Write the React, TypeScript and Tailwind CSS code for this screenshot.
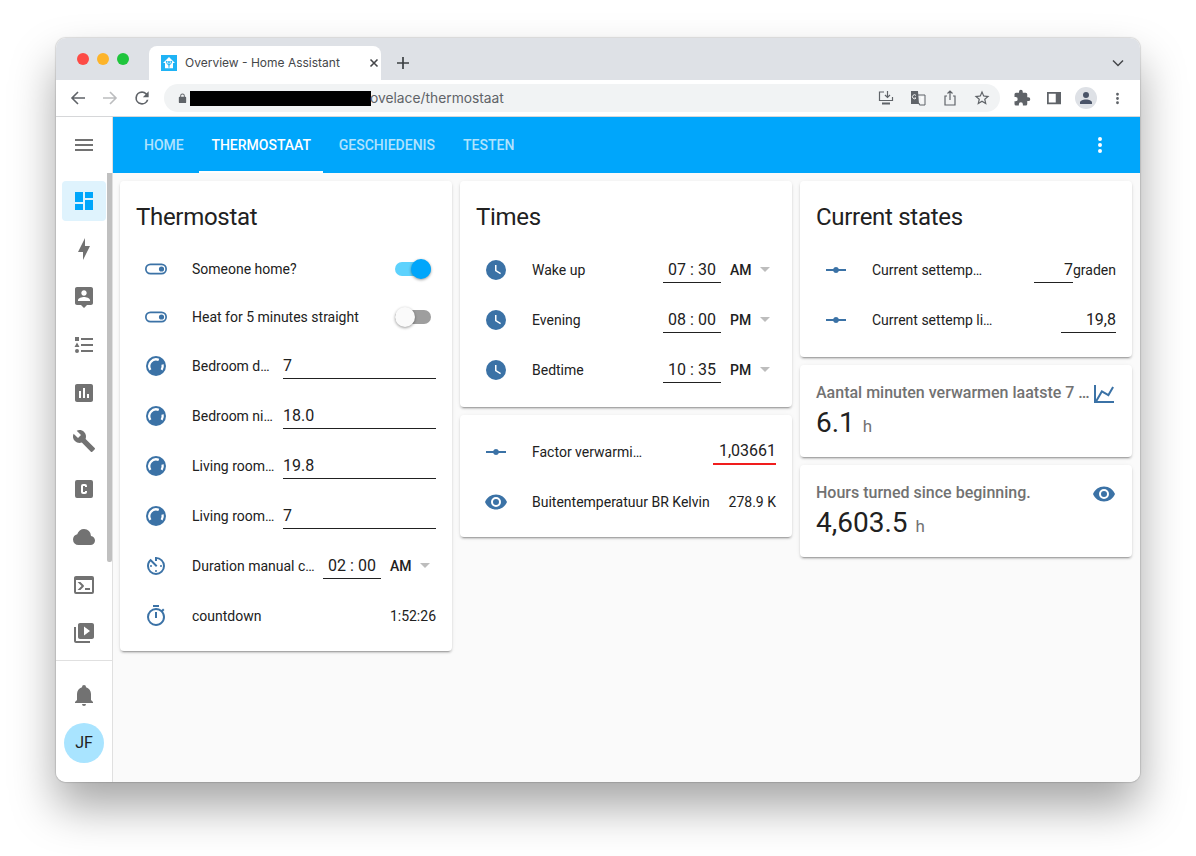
import { ReactNode } from "react";

const BLUE = "text-[#3b72a6]";

const P = {
  menu: "M3 6h18v2H3V6m0 5h18v2H3v-2m0 5h18v2H3v-2Z",
  dots: "M12 16a2 2 0 0 1 2 2 2 2 0 0 1-2 2 2 2 0 0 1-2-2 2 2 0 0 1 2-2m0-6a2 2 0 0 1 2 2 2 2 0 0 1-2 2 2 2 0 0 1-2-2 2 2 0 0 1 2-2m0-6a2 2 0 0 1 2 2 2 2 0 0 1-2 2 2 2 0 0 1-2-2 2 2 0 0 1 2-2Z",
  dashboard: "M13,3V9H21V3M13,21H21V11H13M3,21H11V15H3M3,13H11V3H3V13Z",
  bolt: "M11 15H6L13 1V9H18L11 23V15Z",
  personPin: "M19 2H5c-1.11 0-2 .9-2 2v14c0 1.1.89 2 2 2h4l3 3 3-3h4c1.1 0 2-.9 2-2V4c0-1.1-.9-2-2-2zm-7 3.3c1.49 0 2.7 1.21 2.7 2.7 0 1.49-1.21 2.7-2.7 2.7-1.49 0-2.7-1.21-2.7-2.7 0-1.49 1.21-2.7 2.7-2.7zM18 16H6v-.9c0-2 4-3.1 6-3.1s6 1.1 6 3.1v.9z",
  list: "M5,9.5L7.5,14H2.5L5,9.5M3,4H7V8H3V4M5,20A2,2 0 0,0 7,18A2,2 0 0,0 5,16A2,2 0 0,0 3,18A2,2 0 0,0 5,20M9,5V7H21V5H9M9,19H21V17H9V19M9,13H21V11H9V13Z",
  chartBox: "M9 17H7V10H9V17M13 17H11V7H13V17M17 17H15V13H17V17M19 3H5C3.9 3 3 3.9 3 5V19C3 20.1 3.9 21 5 21H19C20.1 21 21 20.1 21 19V5C21 3.9 20.1 3 19 3Z",
  wrench: "M22.7,19L13.6,9.9C14.5,7.6 14,4.9 12.1,3C10.1,1 7.1,0.6 4.7,1.7L9,6L6,9L1.6,4.7C0.4,7.1 0.9,10.1 2.9,12.1C4.8,14 7.5,14.5 9.8,13.6L18.9,22.7C19.3,23.1 19.9,23.1 20.3,22.7L22.6,20.4C23.1,20 23.1,19.3 22.7,19Z",
  cBox: "M11,7A2,2 0 0,0 9,9V15A2,2 0 0,0 11,17H13A2,2 0 0,0 15,15V14H13V15H11V9H13V10H15V9A2,2 0 0,0 13,7H11M5,3H19A2,2 0 0,1 21,5V19A2,2 0 0,1 19,21H5A2,2 0 0,1 3,19V5A2,2 0 0,1 5,3Z",
  cloud: "M6.5 20Q4.22 20 2.61 18.43 1 16.85 1 14.58 1 12.63 2.17 11.1 3.35 9.57 5.25 9.15 5.88 6.85 7.75 5.43 9.63 4 12 4 14.93 4 16.96 6.04 19 8.07 19 11 20.73 11.2 21.86 12.5 23 13.78 23 15.5 23 17.38 21.69 18.69 20.38 20 18.5 20Z",
  console: "M20,19V7H4V19H20M20,3A2,2 0 0,1 22,5V19A2,2 0 0,1 20,21H4A2,2 0 0,1 2,19V5C2,3.89 2.9,3 4,3H20M13,17V15H18V17H13M9.58,13L5.57,9H8.4L11.7,12.3C12.09,12.69 12.09,13.33 11.7,13.72L8.42,17H5.59L9.58,13Z",
  playBox: "M4 6H2V20C2 21.1 2.9 22 4 22H18V20H4V6M20 2H8C6.9 2 6 2.9 6 4V16C6 17.1 6.9 18 8 18H20C21.1 18 22 17.1 22 16V4C22 2.9 21.1 2 20 2M12 14.5V5.5L18 10L12 14.5Z",
  bell: "M21,19V20H3V19L5,17V11C5,7.9 7.03,5.17 10,4.29C10,4.19 10,4.1 10,4A2,2 0 0,1 12,2A2,2 0 0,1 14,4C14,4.1 14,4.19 14,4.29C16.97,5.17 19,7.9 19,11V17L21,19M14,21A2,2 0 0,1 12,23A2,2 0 0,1 10,21",
  toggle: "M17.5 6.5h-11a5.5 5.5 0 0 0 0 11h11a5.5 5.5 0 0 0 0-11Zm0 9.3h-11a3.8 3.8 0 0 1 0-7.6h11a3.8 3.8 0 0 1 0 7.6Zm0-6.4a2.6 2.6 0 1 0 0 5.2 2.6 2.6 0 0 0 0-5.2Z",
  clock: "M12,2A10,10 0 0,0 2,12A10,10 0 0,0 12,22A10,10 0 0,0 22,12A10,10 0 0,0 12,2M16.2,16.2L11,13V7H12.5V12.2L17,14.9L16.2,16.2Z",
  eye: "M12,9A3,3 0 0,0 9,12A3,3 0 0,0 12,15A3,3 0 0,0 15,12A3,3 0 0,0 12,9M12,17A5,5 0 0,1 7,12A5,5 0 0,1 12,7A5,5 0 0,1 17,12A5,5 0 0,1 12,17M12,4.5C7,4.5 2.73,7.61 1,12C2.73,16.39 7,19.5 12,19.5C17,19.5 21.27,16.39 23,12C21.27,7.61 17,4.5 12,4.5Z",
  slider: "M2 11h7.17a3 3 0 0 1 5.66 0H22v2h-7.17a3 3 0 0 1-5.66 0H2v-2Z",
  chartLine: "M16,11.78L20.24,4.45L21.97,5.45L16.74,14.5L10.23,10.75L5.46,19H22V21H2V3H4V17.54L9.5,8L16,11.78Z",
  avTimer: "M11,17A1,1 0 0,0 12,18A1,1 0 0,0 13,17A1,1 0 0,0 12,16A1,1 0 0,0 11,17M11,3V7H13V5.08C16.39,5.57 19,8.47 19,12A7,7 0 0,1 12,19A7,7 0 0,1 5,12C5,10.32 5.59,8.78 6.58,7.58L12,13L13.41,11.59L6.61,4.79V4.81C4.42,6.45 3,9.05 3,12A9,9 0 0,0 12,21A9,9 0 0,0 21,12A9,9 0 0,0 12,3M18,12A1,1 0 0,0 17,11A1,1 0 0,0 16,12A1,1 0 0,0 17,13A1,1 0 0,0 18,12M6,12A1,1 0 0,0 7,13A1,1 0 0,0 8,12A1,1 0 0,0 7,11A1,1 0 0,0 6,12Z",
  timer: "M12,20A7,7 0 0,1 5,13A7,7 0 0,1 12,6A7,7 0 0,1 19,13A7,7 0 0,1 12,20M19.03,7.39L20.45,5.97C20,5.46 19.55,5 19.04,4.56L17.62,6C16.07,4.74 14.12,4 12,4A9,9 0 0,0 3,13A9,9 0 0,0 12,22C17,22 21,17.97 21,13C21,10.88 20.26,8.93 19.03,7.39M11,14H13V8H11M15,1H9V3H15V1Z",
};

function Icon({ d, className }: { d: string; className?: string }) {
  return (
    <svg viewBox="0 0 24 24" className={className} fill="currentColor">
      <path d={d} />
    </svg>
  );
}

function RowIcon({ d }: { d: string }) {
  return (
    <div className="ml-2 mr-6 size-6 shrink-0">
      <Icon d={d} className={`size-6 ${BLUE}`} />
    </div>
  );
}

function GaugeIcon() {
  return (
    <div className="ml-2 mr-6 size-6 shrink-0">
      <svg viewBox="0 0 24 24" className={`size-6 ${BLUE}`} fill="none">
        <circle cx="12" cy="12" r="10" fill="currentColor" />
        <path d="M6.4 15.8A6.8 6.8 0 0 1 14.8 5.9" stroke="white" strokeWidth="2.3" />
        <path d="M18.6 10.6A6.8 6.8 0 0 1 17.6 15.8" stroke="white" strokeWidth="2.3" />
      </svg>
    </div>
  );
}

function Label({ children, className }: { children: ReactNode; className?: string }) {
  return <div className={`whitespace-nowrap text-[14px] text-[#212121] ${className ?? "flex-1"}`}>{children}</div>;
}

function NumberField({ value, className }: { value: string; className?: string }) {
  return (
    <div className={`flex h-[26px] items-center text-[16px] text-[#212121] ${className ?? ""}`}>
      {value}
    </div>
  );
}

function TimeRow({ label, time, ampm, icon, labelClass }: { label: string; time: string; ampm: string; icon: string; labelClass?: string }) {
  return (
    <div className="flex h-[50px] items-center">
      <RowIcon d={icon} />
      <Label className={labelClass}>{label}</Label>
      <NumberField value={time} className="ml-auto w-[58px] shrink-0 justify-center border-b border-[#212121]" />
      <div className="ml-[9px] w-[24px] text-[14px] font-medium text-[#212121]">{ampm}</div>
      <div className="mx-[6px] mt-[-2px] size-0 border-x-[5px] border-t-[5px] border-x-transparent border-t-[#bdbdbd]" />
    </div>
  );
}

function Card({ title, children, className }: { title?: string; children: ReactNode; className?: string }) {
  return (
    <div className={`rounded-[4px] bg-white shadow-[0_2px_2px_0_rgba(0,0,0,0.14),0_1px_5px_-1px_rgba(0,0,0,0.12),0_3px_1px_-2px_rgba(0,0,0,0.2)] ${className ?? ""}`}>
      {title && <div className="px-4 pt-5 text-[24px] leading-8 tracking-[-0.3px] text-[#212121]">{title}</div>}
      {children}
    </div>
  );
}

function Stat({ title, value, icon }: { title: string; value: string; icon: string }) {
  return (
    <Card className="h-[92px] px-4 pt-[18px]">
      <div className="flex h-5 items-center justify-between">
        <div className="whitespace-nowrap text-[16px] font-medium text-[#727272]">{title}</div>
        <Icon d={icon} className={`mt-[1px] size-6 shrink-0 ${BLUE}`} />
      </div>
      <div className="mt-[4px] flex items-baseline text-[28px] leading-8 text-[#212121]">
        {value}
        <span className="ml-[8px] text-[17px] text-[#727272]">h</span>
      </div>
    </Card>
  );
}

const NAV = [P.bolt, P.personPin, P.list, P.chartBox, P.wrench, P.cBox, P.cloud, P.console, P.playBox];

export default function App() {
  return (
    <div className="h-[856px] w-[1196px] overflow-hidden bg-white pl-[56px] pt-[38px] font-['Roboto',sans-serif]">
      <div className="flex h-[744px] w-[1084px] flex-col overflow-hidden rounded-[10px] bg-white shadow-[0_25px_45px_rgba(0,0,0,0.35),0_0_1px_1px_rgba(0,0,0,0.12)]">
        {/* tab strip */}
        <div className="relative flex h-[42px] shrink-0 items-end bg-[#dee1e6] pl-[93px] font-['Inter',sans-serif]">
          <div className="absolute left-[21px] top-[15px] flex gap-2">
            <div className="size-3 rounded-full bg-[#fd4b46]" />
            <div className="size-3 rounded-full bg-[#fdb42a]" />
            <div className="size-3 rounded-full bg-[#1fc53c]" />
          </div>
          <div className="flex h-[34px] w-[232px] items-center rounded-t-[8px] bg-white pl-[12px] pr-[1px]">
            <div className="flex size-4 items-center justify-center bg-[#1fb3f5] text-white">
              <svg viewBox="0 0 24 24" className="size-4" fill="currentColor"><path d="M12 3 3 12h3v8h12v-8h3l-9-9Zm0 6a1.5 1.5 0 0 1 .8 2.8V14l2-2v-.6a1.4 1.4 0 1 1 1.2 0v1.1l-3.2 3.2V19h-1.6v-3.3L8 12.5v-1.1a1.4 1.4 0 1 1 1.2 0v.6l2 2v-2.2A1.5 1.5 0 0 1 12 9Z" /></svg>
            </div>
            <div className="ml-[8px] flex-1 whitespace-nowrap text-[12px] text-[#45474a]">Overview - Home Assistant</div>
            <svg viewBox="0 0 12 12" className="size-3 text-[#45474a]" stroke="currentColor" strokeWidth="1.6"><path d="M2.5 2.5l7 7M9.5 2.5l-7 7" /></svg>
          </div>
          <svg viewBox="0 0 14 14" className="mb-[10px] ml-[15px] size-[14px] text-[#3c4043]" stroke="currentColor" strokeWidth="1.7"><path d="M7 1v12M1 7h12" /></svg>
          <svg viewBox="0 0 12 12" className="mb-[11px] ml-auto mr-[16px] size-3 text-[#45474a]" fill="none" stroke="currentColor" strokeWidth="1.5"><path d="M1 3.5 6 8.5 11 3.5" /></svg>
        </div>

        {/* toolbar */}
        <div className="flex h-[37px] shrink-0 items-center border-b border-[#d6d7d9] bg-white font-['Inter',sans-serif]">
          <svg viewBox="0 0 16 16" className="ml-[14px] size-4 text-[#5f6368]" fill="none" stroke="currentColor" strokeWidth="1.6"><path d="M15 8H2M8 2 2 8l6 6" /></svg>
          <svg viewBox="0 0 16 16" className="ml-[16px] size-4 text-[#bcbdbf]" fill="none" stroke="currentColor" strokeWidth="1.6"><path d="M1 8h13M8 2l6 6-6 6" /></svg>
          <svg viewBox="0 0 24 24" className="ml-[14px] size-5 text-[#5f6368]" fill="currentColor"><path d="M17.65 6.35A7.96 7.96 0 0 0 12 4a8 8 0 1 0 7.73 10h-2.08A6 6 0 1 1 12 6c1.66 0 3.14.69 4.22 1.78L13 11h7V4l-2.35 2.35Z" /></svg>
          <div className="ml-[12px] flex h-7 w-[836px] items-center rounded-full bg-[#f1f3f4] pl-[13px] pr-[10px]">
            <svg viewBox="0 0 24 24" className="size-[11px] text-[#5f6368]" fill="currentColor"><path d="M18 8h-1V6A5 5 0 0 0 7 6v2H6a2 2 0 0 0-2 2v10c0 1.1.9 2 2 2h12a2 2 0 0 0 2-2V10a2 2 0 0 0-2-2ZM9 6a3 3 0 0 1 6 0v2H9V6Z" /></svg>
            <div className="ml-[2px] h-[15px] w-[181px] bg-black" />
            <div className="-ml-[1px] text-[13.8px] text-[#5f6368]">ovelace/thermostaat</div>
            <div className="ml-auto flex items-center gap-4 text-[#5f6368]">
              <svg viewBox="0 0 16 16" className="size-4" fill="none" stroke="currentColor" strokeWidth="1.2"><path d="M6 2H1.5v8.5h13V7M9.5 1v6M7 5l2.5 2.5L12 5" /><path d="M4 13.5h8" strokeWidth="2" /></svg>
              <svg viewBox="0 0 16 16" className="size-4" fill="none"><path d="M1 1h7l1 13H1V1Z" fill="currentColor" /><path d="M8 5h7v10H9.5L9 13" stroke="currentColor" /><path d="M6 5.5A2 2 0 1 0 6 8H4.5M11 7.5h2.5M12 7.5v5" stroke="white" strokeWidth="0.9" /></svg>
              <svg viewBox="0 0 16 16" className="size-4" fill="none" stroke="currentColor" strokeWidth="1.2"><path d="M5 6H3v9h10V6h-2M8 10V1M5.5 3.5 8 1l2.5 2.5" /></svg>
              <svg viewBox="0 0 24 24" className="-mx-[1px] size-[18px]" fill="currentColor"><path d="m22 9.24-7.19-.62L12 2 9.19 8.63 2 9.24l5.46 4.73L5.82 21 12 17.27 18.18 21l-1.63-7.03L22 9.24ZM12 15.4l-3.76 2.27 1-4.28-3.32-2.88 4.38-.38L12 6.1l1.71 4.04 4.38.38-3.32 2.88 1 4.28L12 15.4Z" /></svg>
            </div>
          </div>
          <div className="ml-[13px] flex items-center text-[#5f6368]">
            <svg viewBox="0 0 24 24" className="size-[18px]" fill="currentColor"><path d="M20.5 11H19V7a2 2 0 0 0-2-2h-4V3.5a2.5 2.5 0 0 0-5 0V5H4a2 2 0 0 0-2 2v3.8h1.5a2.7 2.7 0 0 1 0 5.4H2V20a2 2 0 0 0 2 2h3.8v-1.5a2.7 2.7 0 0 1 5.4 0V22H17a2 2 0 0 0 2-2v-4h1.5a2.5 2.5 0 0 0 0-5Z" /></svg>
            <svg viewBox="0 0 16 16" className="ml-[16px] size-[14px]" fill="currentColor"><path fillRule="evenodd" d="M0 1h16v14H0V1Zm2 2v10h8V3H2Z" /></svg>
            <div className="ml-[14px] flex size-[22px] items-center justify-center rounded-full bg-[#dee1e6] text-[#4a5468]">
              <svg viewBox="0 0 24 24" className="size-[18px]" fill="currentColor"><path d="M12 4a4 4 0 1 1 0 8 4 4 0 0 1 0-8Zm0 10c4.4 0 8 1.8 8 4v2H4v-2c0-2.2 3.6-4 8-4Z" /></svg>
            </div>
            <Icon d={P.dots} className="ml-[12px] size-[17px]" />
          </div>
        </div>

        {/* HA app */}
        <div className="flex min-h-0 flex-1">
          <div className="flex w-[57px] shrink-0 flex-col border-r border-[#e0e0e0] bg-white text-[#727272]">
            <div className="flex h-14 shrink-0 items-center pl-4">
              <Icon d={P.menu} className="size-6" />
            </div>
            <div className="relative flex h-[488px] shrink-0 flex-col border-b border-[#e0e0e0] pl-[6px] pt-[8px]">
              <div className="flex h-10 w-[44px] items-center justify-center rounded-[4px] bg-[#dff3fd]">
                <Icon d={P.dashboard} className="size-6 text-[#00a6fb]" />
              </div>
              {NAV.map((d) => (
                <div key={d} className="mt-[8px] flex h-10 w-[44px] items-center justify-center">
                  <Icon d={d} className="size-6" />
                </div>
              ))}
              <div className="absolute right-0 top-0 h-[389px] w-[5px] rounded-b-[2px] bg-[#c0c0c0]" />
            </div>
            <div className="mt-[22px] flex shrink-0 justify-center">
              <Icon d={P.bell} className="size-6" />
            </div>
            <div className="ml-[8px] mt-4 flex size-10 items-center justify-center rounded-full bg-[#a9e4ff] text-[16px] text-[#212121]">JF</div>
          </div>

          <div className="flex min-w-0 flex-1 flex-col bg-[#fafafa]">
            <div className="flex h-14 shrink-0 items-center bg-[#00a6fb] pl-[31px] pr-[28px] text-[14px] font-medium text-white/70">
              <div className="mr-[15px]">HOME</div>
              <div className="relative flex h-full w-[124px] items-center justify-center pl-[1px] text-white">
                THERMOSTAAT
                <div className="absolute inset-x-0 bottom-0 h-[2px] bg-white" />
              </div>
              <div className="ml-4">GESCHIEDENIS</div>
              <div className="ml-[28px]">TESTEN</div>
              <Icon d={P.dots} className="ml-auto size-6 text-white" />
            </div>

            <div className="flex gap-2 px-[7px] pt-2">
              {/* col 1 */}
              <Card title="Thermostat" className="h-[470px] w-[332px]">
                <div className="px-4 pt-3">
                  <div className="flex h-[48px] items-center">
                    <RowIcon d={P.toggle} />
                    <Label>Someone home?</Label>
                    <div className="relative mr-[5px] h-[14px] w-[36px] rounded-full bg-[#5dd2fd]">
                      <div className="absolute right-0 top-[-3px] size-5 rounded-full bg-[#00a6fb] shadow-[0_1px_3px_rgba(0,0,0,0.4)]" />
                    </div>
                  </div>
                  <div className="flex h-[48px] items-center">
                    <RowIcon d={P.toggle} />
                    <Label>Heat for 5 minutes straight</Label>
                    <div className="relative mr-[5px] h-[14px] w-[36px] rounded-full bg-[#9e9e9e]">
                      <div className="absolute left-0 top-[-3px] size-5 rounded-full bg-[#fafafa] shadow-[0_1px_3px_rgba(0,0,0,0.4)]" />
                    </div>
                  </div>
                  {[
                    ["Bedroom d…", "7"],
                    ["Bedroom ni…", "18.0"],
                    ["Living room…", "19.8"],
                    ["Living room…", "7"],
                  ].map(([l, v], i) => (
                    <div key={i} className="flex h-[50px] items-center">
                      <GaugeIcon />
                      <Label className="w-[91px] shrink-0">{l}</Label>
                      <NumberField value={v} className="flex-1 border-b border-[#212121]" />
                    </div>
                  ))}
                  <TimeRow label="Duration manual c…" time="02 : 00" ampm="AM" icon={P.avTimer} labelClass="w-[122px]" />
                  <div className="flex h-[50px] items-center">
                    <RowIcon d={P.timer} />
                    <Label>countdown</Label>
                    <div className="text-[14px] text-[#212121]">1:52:26</div>
                  </div>
                </div>
              </Card>

              {/* col 2 */}
              <div className="flex w-[332px] flex-col gap-2">
                <Card title="Times" className="h-[226px]">
                  <div className="px-4 pt-3">
                    <TimeRow label="Wake up" time="07 : 30" ampm="AM" icon={P.clock} />
                    <TimeRow label="Evening" time="08 : 00" ampm="PM" icon={P.clock} />
                    <TimeRow label="Bedtime" time="10 : 35" ampm="PM" icon={P.clock} />
                  </div>
                </Card>
                <Card className="h-[122px] px-4 pt-3">
                  <div className="flex h-[50px] items-center">
                    <RowIcon d={P.slider} />
                    <Label>Factor verwarmi…</Label>
                    <NumberField value="1,03661" className="w-[63px] justify-end border-b-2 border-[#f01d1d]" />
                  </div>
                  <div className="flex h-[50px] items-center">
                    <RowIcon d={P.eye} />
                    <Label>Buitentemperatuur BR Kelvin</Label>
                    <div className="text-[14px] text-[#212121]">278.9 K</div>
                  </div>
                </Card>
              </div>

              {/* col 3 */}
              <div className="flex w-[332px] flex-col gap-2">
                <Card title="Current states" className="h-[176px]">
                  <div className="px-4 pt-3">
                    <div className="flex h-[50px] items-center">
                      <RowIcon d={P.slider} />
                      <Label>Current settemp…</Label>
                      <NumberField value="7" className="w-[39px] justify-end border-b border-[#212121]" />
                      <div className="text-[14px] text-[#212121]">graden</div>
                    </div>
                    <div className="flex h-[50px] items-center">
                      <RowIcon d={P.slider} />
                      <Label>Current settemp li…</Label>
                      <NumberField value="19,8" className="w-[55px] justify-end border-b border-[#212121]" />
                    </div>
                  </div>
                </Card>
                <Stat title="Aantal minuten verwarmen laatste 7 …" value="6.1" icon={P.chartLine} />
                <Stat title="Hours turned since beginning." value="4,603.5" icon={P.eye} />
              </div>
            </div>
          </div>
        </div>
      </div>
    </div>
  );
}
